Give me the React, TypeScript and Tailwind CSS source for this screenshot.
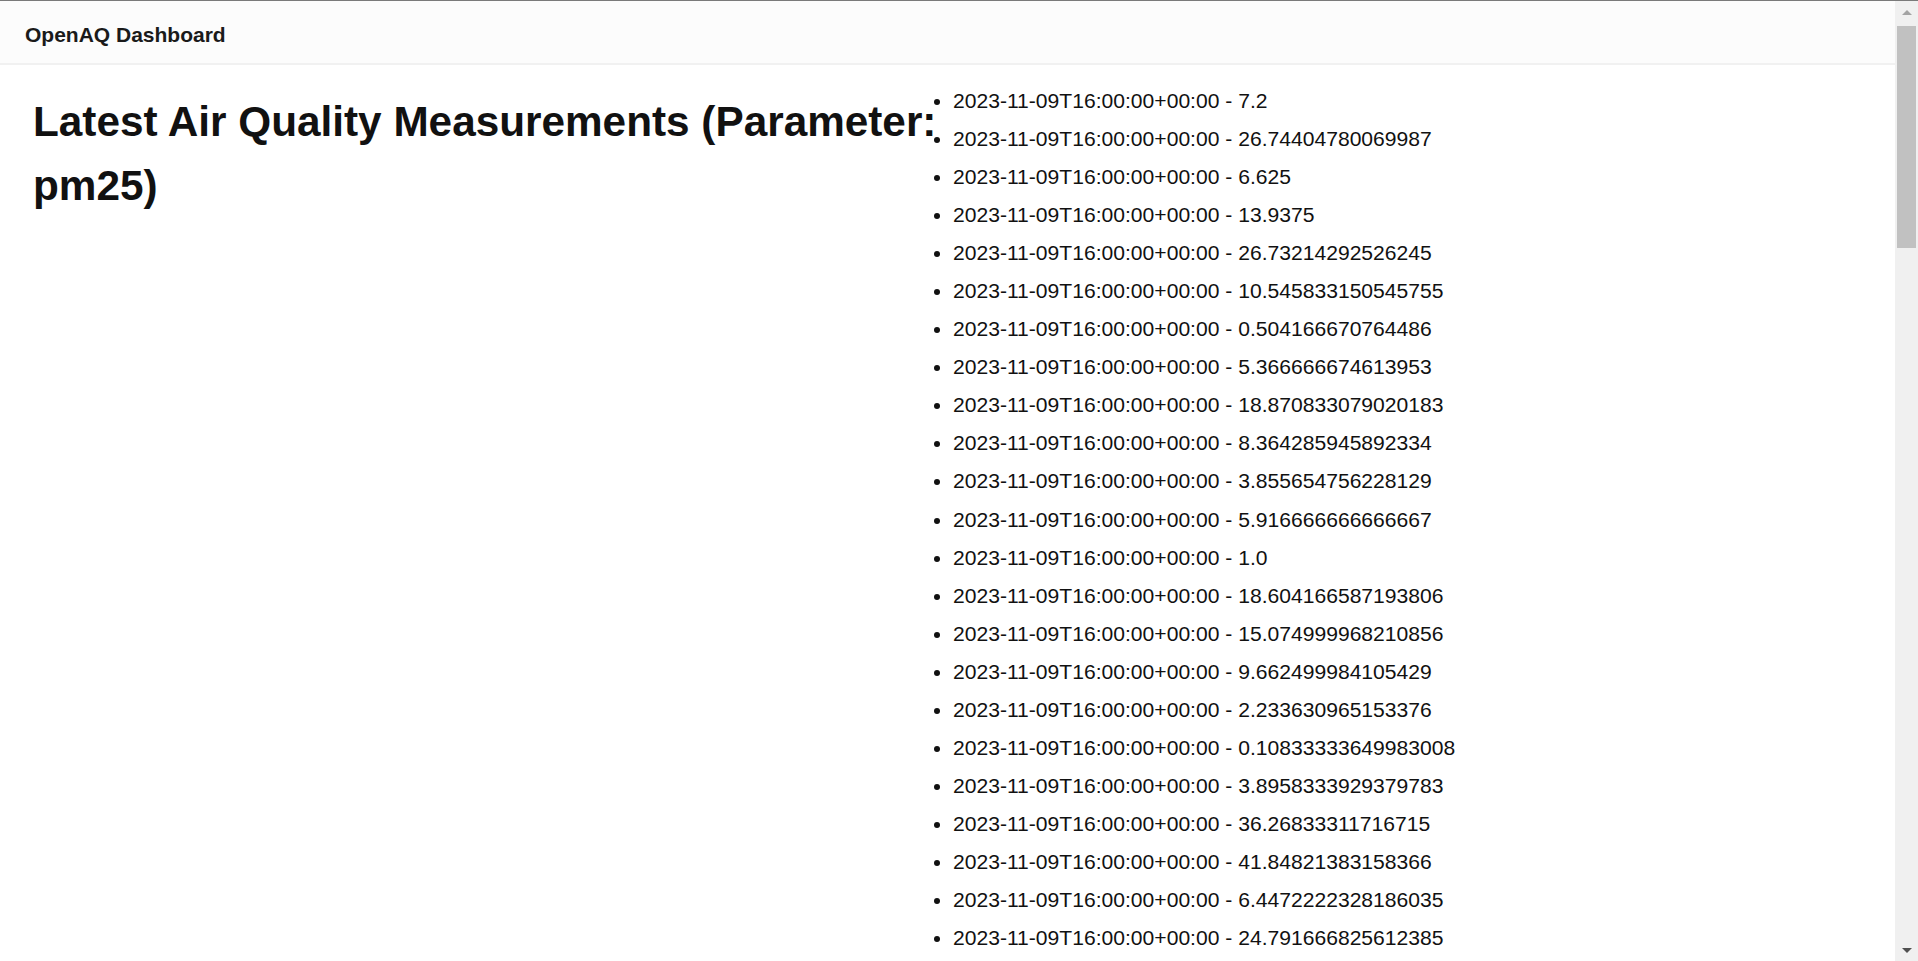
import React from "react";

const values = [
  "7.2",
  "26.74404780069987",
  "6.625",
  "13.9375",
  "26.73214292526245",
  "10.545833150545755",
  "0.504166670764486",
  "5.366666674613953",
  "18.870833079020183",
  "8.364285945892334",
  "3.855654756228129",
  "5.916666666666667",
  "1.0",
  "18.604166587193806",
  "15.074999968210856",
  "9.662499984105429",
  "2.233630965153376",
  "0.10833333649983008",
  "3.8958333929379783",
  "36.26833311716715",
  "41.84821383158366",
  "6.4472222328186035",
  "24.791666825612385",
];

export default function App() {
  return (
    <div
      className="h-screen flex flex-col overflow-hidden bg-white text-[#111]"
      style={{ fontFamily: '"Liberation Sans", Arial, sans-serif' }}
    >
      <div className="h-px shrink-0 bg-[#7a7a7a]" />
      <div className="flex flex-1 min-h-0">
        <div className="flex-1 min-w-0 overflow-hidden">
          <header className="h-[64px] flex items-center pt-[6px] px-[25px] bg-[#fcfcfc] border-b-2 border-[#f1f1f1]">
            <span className="text-[21px] font-bold text-[#1a1a1a]">OpenAQ Dashboard</span>
          </header>
          <main className="flex">
            <div className="w-[940px] shrink-0 pl-[33px] pt-[25px]">
              <h1 className="text-[42.3px] font-bold leading-[64px] text-[#111]">
                Latest Air Quality Measurements (Parameter: pm25)
              </h1>
            </div>
            <ul className="list-disc pl-[13px] pt-[17px] text-[21.1px] text-[#111]">
              {values.map((v, i) => (
                <li key={i} className="leading-[38.05px] whitespace-nowrap">
                  2023-11-09T16:00:00+00:00 - {v}
                </li>
              ))}
            </ul>
          </main>
        </div>
        <div className="w-[23px] shrink-0 flex flex-col bg-[#f0f0f0]">
          <div className="h-[22px] flex items-center justify-center">
            <div className="w-0 h-0 border-l-[5px] border-r-[5px] border-b-[5px] border-l-transparent border-r-transparent border-b-[#a3a3a3]" />
          </div>
          <div className="flex-1 px-[2px] pt-[3px]">
            <div className="h-[222px] bg-[#c1c1c1]" />
          </div>
          <div className="h-[22px] flex items-center justify-center">
            <div className="w-0 h-0 border-l-[5px] border-r-[5px] border-t-[5px] border-l-transparent border-r-transparent border-t-[#505050]" />
          </div>
        </div>
      </div>
    </div>
  );
}
